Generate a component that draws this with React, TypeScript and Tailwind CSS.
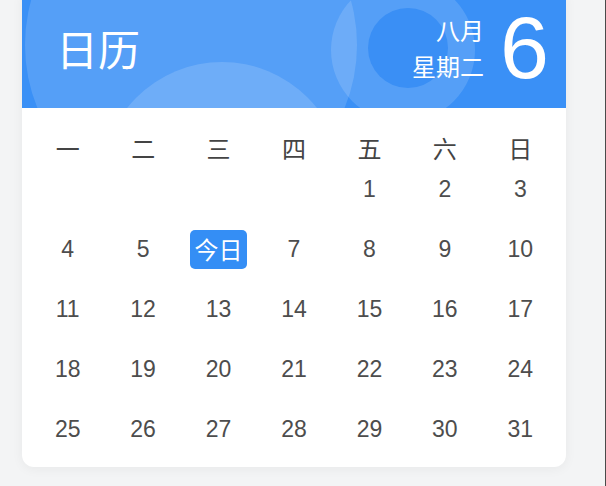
import React from "react";

const WEEK = ["一", "二", "三", "四", "五", "六", "日"];
const LEAD = 4; // Aug 1 falls on Friday
const DAYS = 31;
const TODAY = 6;

function HeaderBubbles() {
  return (
    <svg
      className="pointer-events-none absolute inset-0 h-full w-full"
      viewBox="0 0 544 120"
      preserveAspectRatio="none"
    >
      <circle cx="169" cy="57" r="166" fill="#ffffff" fillOpacity="0.14" />
      <circle cx="200" cy="195" r="121" fill="#ffffff" fillOpacity="0.15" />
      <circle cx="381" cy="62" r="72" fill="#ffffff" fillOpacity="0.14" />
      <circle cx="386" cy="60" r="40" fill="#3a8ff5" />
    </svg>
  );
}

export default function App() {
  const cells: (number | null)[] = [
    ...Array.from({ length: LEAD }, () => null),
    ...Array.from({ length: DAYS }, (_, i) => i + 1),
  ];

  return (
    <div className="h-[486px] w-[606px] overflow-hidden border-r border-[#4a4a4a] bg-[#f3f4f5]">
      <div className="mx-[22px] -mt-[12px] w-[544px] overflow-hidden rounded-[12px] bg-white shadow-[0_2px_12px_rgba(0,0,0,0.05)]">
        <div className="relative flex h-[120px] items-center justify-between overflow-hidden bg-[#3a90f6] pl-[34px] pr-[17px] text-white">
          <HeaderBubbles />
          <div className="relative text-[42px] leading-none [font-family:'Noto_Sans_CJK_SC',sans-serif]">
            日历
          </div>
          <div className="relative flex items-center gap-[16px]">
            <div className="text-right text-[24px] leading-[36px] [font-family:'Noto_Sans_CJK_SC',sans-serif]">
              <div>八月</div>
              <div>星期二</div>
            </div>
            <div className="text-[88px] leading-[100px] [font-family:'Liberation_Sans',Arial,sans-serif]">
              {TODAY}
            </div>
          </div>
        </div>

        <div className="px-[8px] pb-[18px] pt-[20px]">
          <div className="grid h-[40px] grid-cols-7 items-center text-center text-[24px] text-[#444] [font-family:'Noto_Sans_CJK_SC',sans-serif]">
            {WEEK.map((w) => (
              <div key={w}>{w}</div>
            ))}
          </div>
          <div className="mt-[1px] grid grid-cols-7 gap-y-[20px] text-[23px] text-[#4d4d4d] [font-family:'Liberation_Sans',Arial,sans-serif]">
            {cells.map((d, i) => (
              <div key={i} className="flex h-[40px] items-center justify-center">
                {d === TODAY ? (
                  <span className="flex h-[39px] w-[57px] items-center justify-center rounded-[5px] bg-[#348ef5] text-[24px] text-white [font-family:'Noto_Sans_CJK_SC',sans-serif]">
                    今日
                  </span>
                ) : (
                  d
                )}
              </div>
            ))}
          </div>
        </div>
      </div>
    </div>
  );
}
